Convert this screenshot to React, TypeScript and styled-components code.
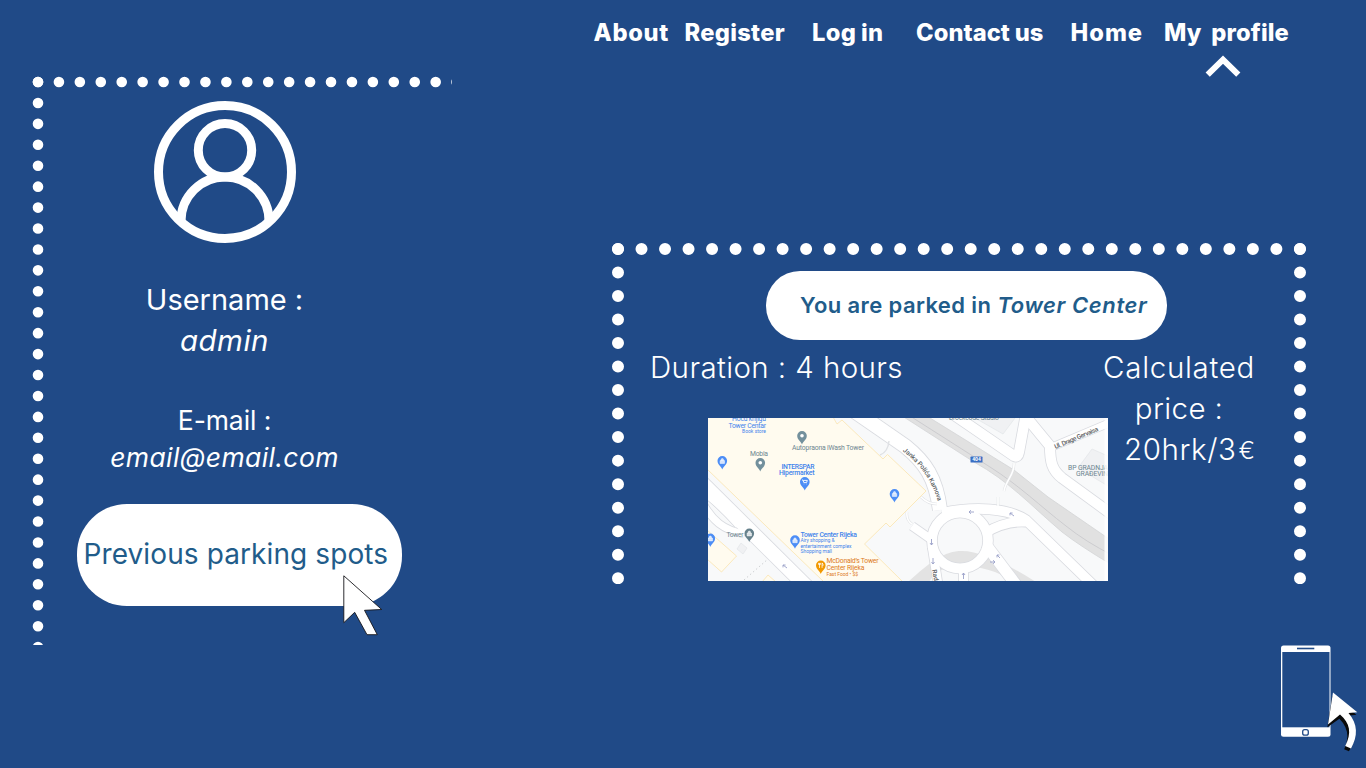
import React from "react";
import styled, { createGlobalStyle } from "styled-components";

const NAVY = "#204a87";
const TEAL = "#215c8a";

const GlobalStyle = createGlobalStyle`
  body {
    margin: 0;
    background: ${NAVY};
    color: #fff;
    font-family: Inter, "Open Sans", sans-serif;
  }
`;

const Page = styled.div`
  display: flex;
  flex-direction: column;
  width: 1366px;
  height: 768px;
  overflow: hidden;
  background: ${NAVY};
`;

const Header = styled.header`
  flex: none;
  box-sizing: border-box;
  height: 76px;
  padding: 16px 0 0 593.5px;
`;

const Nav = styled.nav`
  display: grid;
  grid-template-columns: 91px 127.5px 104px 154.5px 93.5px 130px;
`;

const NavItem = styled.a<{ $tracking?: number }>`
  display: flex;
  flex-direction: column;
  font-size: 23.7px;
  font-weight: 800;
  line-height: 33px;
  letter-spacing: ${(p) => p.$tracking ?? 0.3}px;
  word-spacing: -0.5px;
  white-space: pre;
`;

const ActiveMark = styled.svg`
  width: 36px;
  height: 22px;
  margin: 6px 0 0 41px;
`;

const Main = styled.main`
  flex: none;
  display: flex;
  align-items: flex-start;
  height: 569px;
  padding-left: 32px;
`;

const Frame = styled.section<{ $w: number; $h: number }>`
  position: relative;
  box-sizing: border-box;
  width: ${(p) => p.$w}px;
  height: ${(p) => p.$h}px;
`;

const Dots = styled.svg`
  position: absolute;
  inset: 0;
  width: 100%;
  height: 100%;
  fill: none;
  stroke: #fff;
  stroke-linecap: round;
`;

const ProfileFrame = styled(Frame)`
  padding: 25px 35px 0 0;
  display: flex;
  flex-direction: column;
  align-items: center;
`;

const ParkingFrame = styled(Frame)`
  margin: 167px 0 0 160px;
  padding-top: 28px;
`;

const Avatar = styled.svg`
  flex: none;
  width: 142px;
  height: 142px;
  fill: none;
  stroke: #fff;
  stroke-width: 9;
`;

const Line = styled.div<{ $size?: number; $height?: number; $weight?: number; $tracking?: number; $slanted?: boolean }>`
  font-size: ${(p) => p.$size ?? 29.5}px;
  line-height: ${(p) => p.$height ?? 41}px;
  font-weight: ${(p) => p.$weight ?? 300};
  font-style: ${(p) => (p.$slanted ? "italic" : "normal")};
  font-feature-settings: "calt" 0, "cv11" ${(p) => (p.$slanted ? 1 : 0)};
  letter-spacing: ${(p) => p.$tracking ?? 0.4}px;
  white-space: nowrap;
`;

const Field = styled.div<{ $top: number }>`
  margin-top: ${(p) => p.$top}px;
  text-align: center;
`;

const HistoryButton = styled.button`
  position: relative;
  box-sizing: border-box;
  flex: none;
  width: 325px;
  height: 102px;
  margin: 28px 0 0 30px;
  padding: 0 0 2px 6.5px;
  border: 0;
  border-radius: 50px;
  background: #fff;
  color: ${TEAL};
  font-family: inherit;
  text-align: left;
`;

const Pointer = styled.svg`
  position: absolute;
  left: 265px;
  top: 70px;
  width: 42px;
  height: 64px;
`;

const ParkedPill = styled.div`
  box-sizing: border-box;
  width: 400.5px;
  height: 69px;
  margin-left: 154px;
  padding-left: 34px;
  border-radius: 34px;
  background: #fff;
  color: ${TEAL};
  font-size: 22px;
  font-weight: 600;
  line-height: 68px;
  letter-spacing: 0.4px;
  white-space: nowrap;

  em {
    letter-spacing: 0.6px;
  }
`;

const Details = styled.div`
  display: flex;
  justify-content: space-between;
  padding: 7px 51px 0 38px;
`;

const Price = styled.div`
  text-align: center;
`;

const Euro = styled.span`
  position: relative;
  top: -1px;
  margin: 0 -21px 0 2px;
  font-size: 24.5px;
  letter-spacing: 0;
`;

const MapView = styled.svg`
  display: block;
  width: 400px;
  height: 163px;
  margin: 30px -20px 0 58px;
`;

const Footer = styled.footer`
  display: flex;
  justify-content: flex-end;
  padding-right: 6px;
`;

const PhoneIcon = styled.svg`
  width: 82px;
  height: 112px;
`;

type Poi = { x: number; y: number; color: string; kind: "dot" | "bag" | "cart" | "fork" };

const pois: Poi[] = [
  { x: 802, y: 437, color: "#73909c", kind: "dot" },
  { x: 760.3, y: 464, color: "#73909c", kind: "dot" },
  { x: 749.3, y: 534.5, color: "#66818c", kind: "bag" },
  { x: 722.3, y: 462, color: "#4c8df6", kind: "bag" },
  { x: 804.8, y: 483, color: "#4c8df6", kind: "cart" },
  { x: 894.5, y: 495, color: "#4c8df6", kind: "bag" },
  { x: 710.3, y: 539.5, color: "#4c8df6", kind: "bag" },
  { x: 795, y: 541.3, color: "#4c8df6", kind: "bag" },
  { x: 820.8, y: 566.5, color: "#f29900", kind: "fork" },
];

const glyphs = {
  dot: <circle cy="-1.2" r="1.8" fill="#fff" />,
  bag: <path d="M-2.2-1.4h4.4v2.8h-4.4ZM-1.2-1.4v-.8a1.2 1.2 0 0 1 2.4 0v.8" fill="#fff" stroke="#fff" strokeWidth=".5" fillOpacity=".75" />,
  cart: <path d="M-2.8-3h1l.8 2.600h2.800L2.500-2.600h-4M-1 1h.4M1.600 1h.4" fill="none" stroke="#fff" strokeWidth=".9" />,
  fork: <path d="M-1.300-3.600v5M-2.200-3.600v1.600h1.800v-1.600M1.300 1.400v-5q1.400 1.200.8 3" fill="none" stroke="#fff" strokeWidth=".8" />,
};

const Pin = ({ x, y, color, kind }: Poi) => (
  <g transform={`translate(${x} ${y})`}>
    <path d="M0 7.5C-.8 4.5-4.8 3-4.8-1.2a4.8 4.8 0 0 1 9.6 0C4.8 3 .8 4.5 0 7.5Z" fill={color} />
    {glyphs[kind]}
  </g>
);

const roads: { d: string; width: number }[] = [
  { d: "M696 477L812 592", width: 15 },
  { d: "M700 498C712 522 724 530 744 534", width: 8 },
  { d: "M696 489C712 498 724 510 738 526", width: 6 },
  { d: "M850 408L905 446C925 462 936 478 940 510", width: 15 },
  { d: "M944 408L1014 456Q1018 458 1019 452L1026 414", width: 11 },
  { d: "M1022 412L1050 446C1050 462 1052 470 1062 478L1114 516", width: 11 },
  { d: "M1052 447L1114 421", width: 8 },
  { d: "M942 513C975 506 1008 508 1026 520L1094 586", width: 10.5 },
  { d: "M985 533C1000 524 1012 521 1026 522", width: 10 },
  { d: "M986 545L1020 590", width: 12 },
  { d: "M932 546L939 590", width: 9.5 },
  { d: "M963.5 566V590", width: 10 },
  { d: "M932 540L912 526", width: 9 },
];

const footpaths = "M1014 463C1015 474 1006 480 1004 491M998 497V506M921 497Q928 504 937 504M907 512Q906 520 912 524";

const ParkingMap = () => (
  <MapView viewBox="708 418 400 163" role="img" aria-label="Map of Tower Center">
    <defs>
      <path id="kamova" d="M902.500 451C920 464 933 481 939 506" />
    </defs>
    <rect x="708" y="418" width="400" height="163" fill="#f8f9fa" />
    <g fill="#f0f1f3" stroke="#e3e5e8" strokeWidth=".7">
      <path d="M975 418L1003 434L1015 418Z" />
      <path d="M1092 449L1078 468L1108 486V456Z" />
      <path d="M737 549l4-6 6 5-4 6Z" />
    </g>
    <g fill="#fffbef" stroke="#fbe7b6" strokeWidth=".9">
      <path d="M707 469L707 417H833L837 424L842 420L883 459L887.5 454.5L926 491L890 527L886 523L864.5 544L903 582H824Z" />
      <path d="M707 530L736.5 556L721.5 572L707 559Z" />
      <path d="M762 582L768 575L776 582Z" />
    </g>
    <path d="M908 582C930 562 944 551 962 551S1008 564 1036 582H1014C1000 572 980 566 962 566S935 572 929 582Z" fill="#e3e3e3" />
    <path d="M896 412L974 462C1010 482 1028 503 1062 532Q1080 546 1112 565V541L1048 497L1014 470L930 418L922 412Z" fill="#e1e1e1" stroke="#d3d4d6" strokeWidth=".8" />
    <path d="M910 416L990 467C1020 486 1040 506 1066 526Q1086 542 1112 555" fill="none" stroke="#c6c7ca" strokeWidth=".8" />
    <g fill="none" strokeLinejoin="round">
      <g stroke="#d9dbe0">
        {roads.map(({ d, width }) => <path key={d} d={d} strokeWidth={width + 0.8} />)}
        <circle cx="960" cy="540.5" r="28" strokeWidth="11.4" />
      </g>
      <g stroke="#fff">
        {roads.map(({ d, width }) => <path key={d} d={d} strokeWidth={width - 0.8} />)}
        <circle cx="960" cy="540.5" r="28" strokeWidth="9.8" />
      </g>
      <path d={footpaths} stroke="#e1e3e6" strokeWidth="2.6" />
      <path d={footpaths} stroke="#fff" strokeWidth="1.6" />
      <path d="M880 455Q888 452 889 441" stroke="#dfe1e4" strokeWidth="1.4" />
      <path d="M744 580L768 559" stroke="#c3c5c8" strokeWidth=".8" strokeDasharray="1.5 2.5" />
      <g stroke="#9aa0c8" strokeWidth=".9">
        <path d="M974 512h-5m2-1.8-2 1.8 2 1.8M1014 516l-4-3m2.600 0h-2.600v2.400M931.500 539v6m-1.500-2 1.500 2 1.500-2M933 558v6m-1.500-2 1.500 2 1.500-2M963.500 579v-6m-1.500 2 1.500-2 1.500 2M990 562h5m-2-1.800 2 1.800-2 1.800M1000 558l-3-3m2.400 0H997v2.400M787 568l-4-3m2.600 0H783v2.400" />
      </g>
    </g>
    <rect x="970.500" y="456.600" width="12" height="6" rx=".6" fill="#3a6fc4" />
    <g fontFamily="Roboto, sans-serif" fontSize="6.8">
      <text x="976.500" y="461.400" textAnchor="middle" fill="#fff" fontSize="5" fontWeight="700">404</text>
      {pois.map((p) => <Pin key={`${p.x}-${p.y}`} {...p} />)}
      <g fill="#6d8590">
        <text x="792" y="450.300" textLength="72">Autopraona iWash Tower</text>
        <text x="750" y="456.300" textLength="18">Mobia</text>
        <text x="726.500" y="536.800" textLength="17">Tower</text>
        <text x="949" y="420.200" textLength="50">Brockcode Studio</text>
        <text x="1068" y="469.500" textLength="40">BP GRADNJA</text>
        <text x="1076" y="476" textLength="32">GRAĐEVIN</text>
      </g>
      <g fill="#3f83ec">
        <text x="732" y="421.300" textLength="34">Hoću knjigu</text>
        <text x="728.500" y="428.300" textLength="37.500">Tower Centar</text>
        <text x="742" y="433.300" fontSize="5" textLength="24">Book store</text>
        <g fontWeight="500">
          <text x="781.500" y="469" textLength="33">INTERSPAR</text>
          <text x="779" y="475.300" textLength="35.500">Hipermarket</text>
          <text x="800.500" y="536.600" textLength="56.500">Tower Center Rijeka</text>
        </g>
        <g fontSize="5">
          <text x="800.500" y="542.300" textLength="34">Airy shopping &amp;</text>
          <text x="800.500" y="547.600" textLength="51">entertainment complex</text>
          <text x="800.500" y="552.800" textLength="31.500">Shopping mall</text>
        </g>
      </g>
      <g fill="#dd7a1c">
        <text x="826.500" y="563.300" textLength="52">McDonald’s Tower</text>
        <text x="826.500" y="570" textLength="38">Center Rijeka</text>
        <text x="826.500" y="575.600" fontSize="5" textLength="31.500">Fast Food • $$</text>
      </g>
      <g fill="#5a5d61" fontSize="6.500" fontWeight="500">
        <text><textPath href="#kamova">Janka Polića Kamova</textPath></text>
        <text transform="translate(1055.500 449) rotate(-23)" textLength="47">Ul. Drage Gervaisa</text>
        <text transform="translate(932 570) rotate(78)">Radnička</text>
      </g>
    </g>
    <rect x="1104.500" y="418" width="3.500" height="163" fill="#fff" fillOpacity=".85" />
  </MapView>
);

export default function App() {
  return (
    <Page>
      <GlobalStyle />
      <Header>
        <Nav>
          <NavItem $tracking={0.7}>About</NavItem>
          <NavItem>Register</NavItem>
          <NavItem $tracking={0.3}>Log in</NavItem>
          <NavItem $tracking={0.05}>Contact us</NavItem>
          <NavItem $tracking={1}>Home</NavItem>
          <NavItem $tracking={0.15}>
            {"My  profile"}
            <ActiveMark viewBox="0 0 36 22">
              <path d="M2.700 19.600L18 4.600L33.300 19.600" fill="none" stroke="#fff" strokeWidth="6" />
            </ActiveMark>
          </NavItem>
        </Nav>
      </Header>

      <Main>
        <ProfileFrame $w={420} $h={569}>
          <Dots strokeWidth="10.600">
            <path d="M6 6H425" strokeDasharray="0 20.930" />
            <path d="M6 6V580" strokeDasharray="0 20.930" />
          </Dots>
          <Avatar viewBox="0.500 0.500 142 142">
            <circle cx="71.500" cy="71.500" r="66.500" />
            <circle cx="71.500" cy="49.700" r="26.700" />
            <path d="M27.500 122V120.500a44 44 0 0 1 88 0V122" />
          </Avatar>
          <Field $top={36}>
            <Line $size={29} $weight={400} $tracking={0}>Username :</Line>
            <Line $size={29.5} $weight={400} $slanted $tracking={0.5}>admin</Line>
          </Field>
          <Field $top={41}>
            <Line $size={26.5} $weight={400} $height={37} $tracking={-0.1}>E-mail :</Line>
            <Line $size={26.5} $weight={400} $height={37} $slanted $tracking={0.4}>email@email.com</Line>
          </Field>
          <HistoryButton>
            <Line as="span" $size={28} $weight={400} $tracking={0.1}>Previous parking spots</Line>
            <Pointer viewBox="342 574 42 64">
              <path
                d="M343.800 575.800L381.700 609.500L364.500 610.300L377.300 634.700H367L354.700 612.300L343.800 622.700Z"
                fill="#fff"
                stroke="#15151a"
                strokeWidth=".9"
              />
            </Pointer>
          </HistoryButton>
        </ProfileFrame>

        <ParkingFrame $w={694} $h={341}>
          <Dots strokeWidth="12">
            <path d="M6 6H690" strokeDasharray="0 23.514" />
            <path d="M6 6V337" strokeDasharray="0 23.514" />
            <path d="M688 6V337" strokeDasharray="0 23.514" />
          </Dots>
          <ParkedPill>
            You are parked in <em>Tower Center</em>
          </ParkedPill>
          <Details>
            <div>
              <Line>Duration : 4 hours</Line>
              <ParkingMap />
            </div>
            <Price>
              <Line $tracking={0.7}>Calculated</Line>
              <Line>price :</Line>
              <Line $tracking={0.6}>
                20hrk/3<Euro>€</Euro>
              </Line>
            </Price>
          </Details>
        </ParkingFrame>
      </Main>

      <Footer>
        <PhoneIcon viewBox="1278 645 82 112">
          <rect x="1281" y="645.500" width="49.500" height="91.300" rx="2.500" fill="#fff" />
          <rect x="1282.300" y="652" width="47.200" height="75.300" fill={NAVY} />
          <path d="M1297 648.500H1314.300" stroke={NAVY} strokeWidth="1.600" />
          <rect x="1302.700" y="729.600" width="5.600" height="5.600" rx="2" fill="#fff" stroke={NAVY} strokeWidth="1.300" />
          <g fill="#0a0a0a" transform="translate(-.600 2.800)">
            <path d="M1333 693L1357 712L1348.500 713Q1361 732 1349.500 748.500L1344.800 746.500Q1353 729 1340 716L1328 724.500Z" />
          </g>
          <path d="M1333 692.500L1357.300 712.300L1348.500 713C1358 724 1358 736 1351 748.500L1345.200 746C1352 733 1350 723 1340 714.500L1328 724.500Z" fill="#fff" />
        </PhoneIcon>
      </Footer>
    </Page>
  );
}
